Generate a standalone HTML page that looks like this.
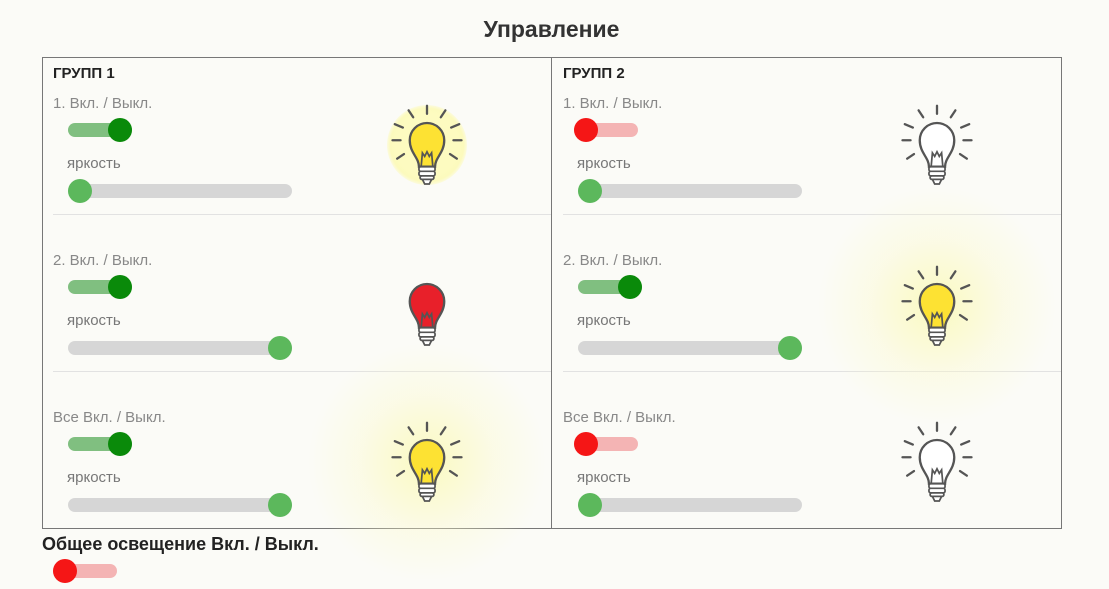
<!DOCTYPE html>
<html><head><meta charset="utf-8"><style>
*{margin:0;padding:0;box-sizing:border-box}
body{width:1109px;height:589px;background:#fbfbf7;font-family:"Liberation Sans",sans-serif;position:relative;overflow:hidden}
.a{position:absolute}
.t{font-size:15px;color:#888;white-space:nowrap}
.tr{height:14px;border-radius:7px}
.th{width:24px;height:24px;border-radius:50%}
.glow{border-radius:50%}
</style></head><body>
<div class="a" style="left:0;width:1103px;top:16px;text-align:center;font-size:23px;font-weight:bold;color:#333">Управление</div>
<div class="a" style="left:42px;top:57px;width:1020px;height:472px;border:1px solid #777"></div>
<div class="a" style="left:551px;top:57px;width:1px;height:472px;background:#777"></div>
<div class="a" style="left:53px;top:214px;width:498px;height:1px;background:#e2e2e2"></div>
<div class="a" style="left:53px;top:371px;width:498px;height:1px;background:#e2e2e2"></div>
<div class="a" style="left:563px;top:214px;width:498px;height:1px;background:#e2e2e2"></div>
<div class="a" style="left:563px;top:371px;width:498px;height:1px;background:#e2e2e2"></div>

<!-- glows -->
<div class="a glow" style="left:387px;top:105px;width:80px;height:80px;background:radial-gradient(circle,#fdfbc0 0,#fdfbc0 55%,rgba(253,250,150,.6) 65%,rgba(255,255,200,0) 75%)"></div>
<div class="a glow" style="left:307px;top:342px;width:240px;height:240px;background:radial-gradient(circle,rgba(250,248,170,.7) 0,rgba(252,250,200,.35) 40%,rgba(252,252,230,0) 70%)"></div>
<div class="a glow" style="left:817px;top:186px;width:240px;height:240px;background:radial-gradient(circle,rgba(250,248,170,.7) 0,rgba(252,250,200,.35) 40%,rgba(252,252,230,0) 70%)"></div>

<div class="a" style="left:53px;top:65px;font-size:15px;font-weight:bold;color:#222">ГРУПП 1</div>
<div class="a" style="left:563px;top:65px;font-size:15px;font-weight:bold;color:#222">ГРУПП 2</div>

<svg width="0" height="0" style="position:absolute"><defs>
<g id="b">
<g stroke="#555" stroke-width="2" stroke-linecap="round">
<line x1="40" y1="12" x2="40" y2="5"/><line x1="28" y1="15" x2="24" y2="9"/><line x1="52" y1="15" x2="56" y2="9"/>
<line x1="19" y1="24" x2="12" y2="21"/><line x1="61" y1="24" x2="68" y2="21"/>
<line x1="17" y1="35" x2="10" y2="35"/><line x1="63" y1="35" x2="70" y2="35"/>
<line x1="20" y1="47" x2="14" y2="51"/><line x1="60" y1="47" x2="66" y2="51"/>
</g>
</g>
<g id="body">
<path d="M33 58 C33 50 25 46 25 35 A15 15 0 0 1 55 35 C55 46 47 50 47 58 Z" stroke="#555" stroke-width="2"/>
<path d="M35 57 L36 46 L38 49 L40 45 L42 49 L44 46 L45 57" fill="none" stroke="#555" stroke-width="1.5"/>
<g fill="#fff" stroke="#555" stroke-width="1.5"><rect x="33" y="58" width="14" height="4" rx="1.5"/><rect x="33" y="62" width="14" height="4" rx="1.5"/><rect x="34" y="66" width="12" height="3" rx="1.5"/><path d="M36 69 L44 69 L42 73 L38 73 Z"/></g>
</g>
</defs></svg>

<!-- bulbs -->
<svg class="a" style="left:381px;top:100px" width="92" height="92" viewBox="0 0 80 80"><use href="#b"/><use href="#body" fill="#fde233"/></svg>
<svg class="a" style="left:891px;top:100px" width="92" height="92" viewBox="0 0 80 80"><use href="#b"/><use href="#body" fill="#fff"/></svg>
<svg class="a" style="left:381px;top:261px" width="92" height="92" viewBox="0 0 80 80"><use href="#body" fill="#e8202a"/></svg>
<svg class="a" style="left:891px;top:261px" width="92" height="92" viewBox="0 0 80 80"><use href="#b"/><use href="#body" fill="#fde233"/></svg>
<svg class="a" style="left:381px;top:417px" width="92" height="92" viewBox="0 0 80 80"><use href="#b"/><use href="#body" fill="#fde233"/></svg>
<svg class="a" style="left:891px;top:417px" width="92" height="92" viewBox="0 0 80 80"><use href="#b"/><use href="#body" fill="#fff"/></svg>

<!-- left group -->
<div class="a t" style="left:53px;top:95px">1. Вкл. / Выкл.</div>
<div class="a tr" style="left:68px;top:123px;width:64px;background:#80bf80"></div><div class="a th" style="left:108px;top:118px;background:#0a8a0a"></div>
<div class="a t" style="left:67px;top:155px;color:#777">яркость</div>
<div class="a tr" style="left:68px;top:184px;width:224px;background:#d6d6d6"></div><div class="a th" style="left:68px;top:179px;background:#5cb85c"></div>

<div class="a t" style="left:53px;top:252px">2. Вкл. / Выкл.</div>
<div class="a tr" style="left:68px;top:280px;width:64px;background:#80bf80"></div><div class="a th" style="left:108px;top:275px;background:#0a8a0a"></div>
<div class="a t" style="left:67px;top:312px;color:#777">яркость</div>
<div class="a tr" style="left:68px;top:341px;width:224px;background:#d6d6d6"></div><div class="a th" style="left:268px;top:336px;background:#5cb85c"></div>

<div class="a t" style="left:53px;top:409px">Все Вкл. / Выкл.</div>
<div class="a tr" style="left:68px;top:437px;width:64px;background:#80bf80"></div><div class="a th" style="left:108px;top:432px;background:#0a8a0a"></div>
<div class="a t" style="left:67px;top:469px;color:#777">яркость</div>
<div class="a tr" style="left:68px;top:498px;width:224px;background:#d6d6d6"></div><div class="a th" style="left:268px;top:493px;background:#5cb85c"></div>

<!-- right group -->
<div class="a t" style="left:563px;top:95px">1. Вкл. / Выкл.</div>
<div class="a tr" style="left:574px;top:123px;width:64px;background:#f4b4b4"></div><div class="a th" style="left:574px;top:118px;background:#f51616"></div>
<div class="a t" style="left:577px;top:155px;color:#777">яркость</div>
<div class="a tr" style="left:578px;top:184px;width:224px;background:#d6d6d6"></div><div class="a th" style="left:578px;top:179px;background:#5cb85c"></div>

<div class="a t" style="left:563px;top:252px">2. Вкл. / Выкл.</div>
<div class="a tr" style="left:578px;top:280px;width:64px;background:#80bf80"></div><div class="a th" style="left:618px;top:275px;background:#0a8a0a"></div>
<div class="a t" style="left:577px;top:312px;color:#777">яркость</div>
<div class="a tr" style="left:578px;top:341px;width:224px;background:#d6d6d6"></div><div class="a th" style="left:778px;top:336px;background:#5cb85c"></div>

<div class="a t" style="left:563px;top:409px">Все Вкл. / Выкл.</div>
<div class="a tr" style="left:574px;top:437px;width:64px;background:#f4b4b4"></div><div class="a th" style="left:574px;top:432px;background:#f51616"></div>
<div class="a t" style="left:577px;top:469px;color:#777">яркость</div>
<div class="a tr" style="left:578px;top:498px;width:224px;background:#d6d6d6"></div><div class="a th" style="left:578px;top:493px;background:#5cb85c"></div>

<div class="a" style="left:42px;top:534px;font-size:18px;font-weight:bold;color:#222">Общее освещение Вкл. / Выкл.</div>
<div class="a tr" style="left:53px;top:564px;width:64px;background:#f4b4b4"></div><div class="a th" style="left:53px;top:559px;background:#f51616"></div>
</body></html>
